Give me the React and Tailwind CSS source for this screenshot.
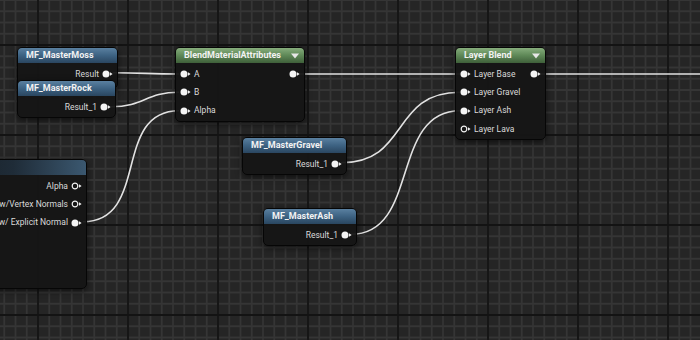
import React from 'react';

const FONT = { fontFamily: 'Roboto, "Noto Sans", sans-serif' };

// grid lines of the graph canvas
const minorX = Array.from({ length: 63 }, (_, i) => 4.25 + i * 11.25);
const minorY = Array.from({ length: 32 }, (_, i) => i * 11.25);
const majorX = [38, 128, 218, 308, 398, 488, 578, 668];
const majorY = [45, 135, 225, 315];

const Grid = () => (
  <svg className="absolute inset-0" width="700" height="340">
    <rect width="700" height="340" fill="#252525" />
    {minorX.map((x) => (
      <line key={'vx' + x} x1={x} y1="0" x2={x} y2="340" stroke="#353535" strokeWidth="1.8" />
    ))}
    {minorY.map((y) => (
      <line key={'hy' + y} x1="0" y1={y} x2="700" y2={y} stroke="#353535" strokeWidth="1.8" />
    ))}
    {majorX.map((x) => (
      <line key={'mx' + x} x1={x} y1="0" x2={x} y2="340" stroke="#131313" strokeWidth="1.8" />
    ))}
    {majorY.map((y) => (
      <line key={'my' + y} x1="0" y1={y} x2="700" y2={y} stroke="#131313" strokeWidth="1.8" />
    ))}
  </svg>
);

const Wires = () => (
  <svg className="absolute inset-0" width="700" height="340" fill="none" stroke="#e2e2e2" strokeWidth="1.6">
    <path d="M113 72.7 C145 72.7 146 74 179 74" />
    <path d="M111 106.7 C145 106.7 145 92.3 179 92.3" />
    <path d="M83 221.7 C150 221.7 112 110.7 179 110.7" />
    <path d="M298 74 L460 74" />
    <path d="M540 74 L700 74" />
    <path d="M341 162.7 C410 162.7 390 92.3 460 92.3" />
    <path d="M351 234.3 C420 234.3 390 110.7 460 110.7" />
  </svg>
);

const Pin = ({ hollow }) => (
  <svg width="11" height="8" viewBox="0 0 11 8" className="shrink-0">
    {hollow ? (
      <circle cx="4" cy="4" r="2.8" fill="none" stroke="#f0f0f0" strokeWidth="1.2" />
    ) : (
      <circle cx="4" cy="4" r="3.5" fill="#f4f4f4" />
    )}
    <path d="M8 2.3 L10.6 4 L8 5.7 Z" fill="#f0f0f0" />
  </svg>
);

const InRow = ({ label, hollow }) => (
  <div className="flex items-center gap-[3px] h-[18.3px] pl-[4px] text-[8.5px] text-[#dadada]">
    <Pin hollow={hollow} />
    <span>{label}</span>
  </div>
);

const OutRow = ({ label, hollow }) => (
  <div className="flex items-center justify-end gap-[3px] h-[18.3px] pr-[4px] text-[8.5px] text-[#dadada] whitespace-nowrap">
    {label && <span>{label}</span>}
    <Pin hollow={hollow} />
  </div>
);

const headers = {
  blue: 'bg-gradient-to-b from-[#5a80a0] via-[#3d6282] to-[#2a4660]',
  green: 'bg-gradient-to-b from-[#86ad7c] via-[#5e8857] to-[#3f603a]',
  dark: 'bg-gradient-to-r from-[#161c22] via-[#1f2c38] to-[#3b5870]',
};

const Node = ({ x, y, w, title, color = 'blue', menu, children }) => (
  <div
    className="absolute rounded-[5px] border border-[#060606] bg-[#151515]/95 shadow-[0_2px_6px_rgba(0,0,0,0.6)] overflow-hidden"
    style={{ left: x, top: y, width: w }}
  >
    <div className={`flex items-center justify-between h-[15px] pl-[8px] pr-[5px] ${headers[color]}`}>
      <span className="text-[9px] font-bold text-[#f2f2f2] whitespace-nowrap leading-none">{title}</span>
      {menu && (
        <svg width="8" height="6" viewBox="0 0 8 6">
          <path d="M0 0.5 L8 0.5 L4 5.5 Z" fill="#e6e6e6" />
        </svg>
      )}
    </div>
    <div className="pt-[2px] pb-[1px]">{children}</div>
  </div>
);

export default function App() {
  return (
    <div className="relative w-[700px] h-[340px] overflow-hidden bg-[#252525]" style={FONT}>
      <Grid />
      <Wires />

      <Node x={17} y={47} w={101} title="MF_MasterMoss">
        <OutRow label="Result" />
        <div className="h-[4px]" />
      </Node>
      <Node x={17} y={80} w={99} title="MF_MasterRock">
        <OutRow label="Result_1" />
      </Node>

      <Node x={-60} y={159} w={147} title="" color="dark">
        <div className="h-[110px]">
          <OutRow label="Alpha" hollow />
          <OutRow label="w/Vertex Normals" hollow />
          <OutRow label="w/ Explicit Normal" />
        </div>
      </Node>

      <Node x={175} y={47} w={130} title="BlendMaterialAttributes" color="green" menu>
        <div className="relative">
          <InRow label="A" />
          <InRow label="B" />
          <InRow label="Alpha" />
          <div className="absolute right-0 top-0">
            <OutRow />
          </div>
        </div>
      </Node>

      <Node x={242} y={137} w={105} title="MF_MasterGravel">
        <OutRow label="Result_1" />
      </Node>

      <Node x={263} y={208} w={94} title="MF_MasterAsh">
        <OutRow label="Result_1" />
      </Node>

      <Node x={455} y={47} w={91} title="Layer Blend" color="green" menu>
        <div className="relative">
          <InRow label="Layer Base" />
          <InRow label="Layer Gravel" />
          <InRow label="Layer Ash" />
          <InRow label="Layer Lava" hollow />
          <div className="absolute right-0 top-0">
            <OutRow />
          </div>
        </div>
      </Node>
    </div>
  );
}
